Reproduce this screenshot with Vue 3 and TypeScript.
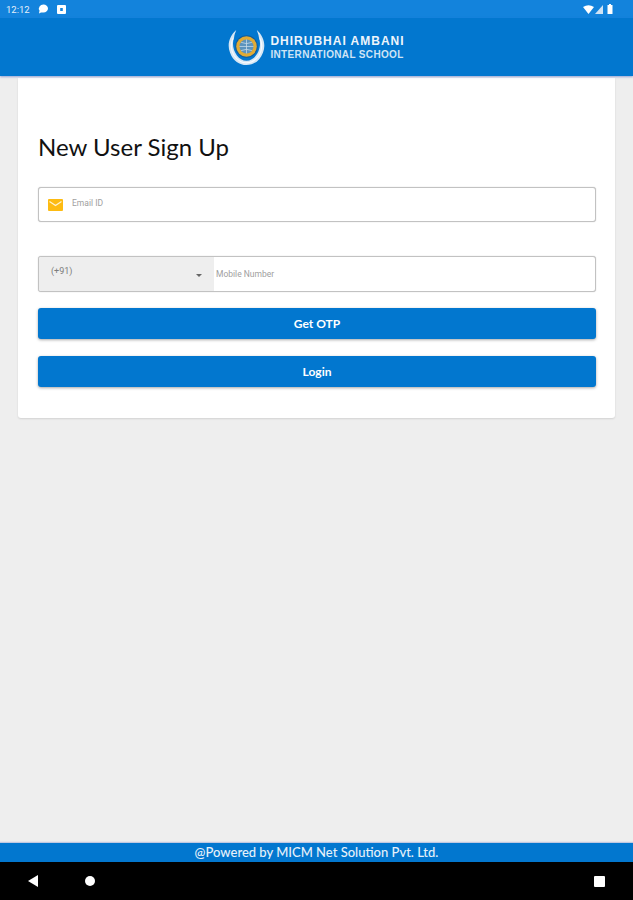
<script setup lang="ts">
const footerText = '@Powered by MICM Net Solution Pvt. Ltd.'
</script>

<template>
  <div class="screen">
    <div class="status">
      <div class="status-left">
        <span class="time">12:12</span>
        <svg width="11" height="10" viewBox="0 0 11 10"><path d="M5.500 0.500a4.500 4 0 0 1 4.500 4 4.500 4 0 0 1-4.500 4H3L1 9.500 1.500 6.500A4.500 4 0 0 1 5.500 0.500Z" fill="#fff" /></svg>
        <svg width="9" height="9" viewBox="0 0 9 9"><path fill-rule="evenodd" d="M1 0h7a1 1 0 0 1 1 1v7a1 1 0 0 1-1 1H1a1 1 0 0 1-1-1V1a1 1 0 0 1 1-1ZM3.200 3v3h2.600V3Z" fill="#fff" /></svg>
      </div>
      <div class="status-right">
        <svg width="11" height="9" viewBox="0 0 11 9"><path d="M0 2Q5.500-1.500 11 2L5.500 9Z" fill="#fff" /></svg>
        <svg width="8" height="9" viewBox="0 0 8 9"><path d="M8 0V9H0Z" fill="#cfe3f5" /></svg>
        <svg class="battery" width="6" height="10" viewBox="0 0 5 10"><path d="M1.500 0h2v1H5v9H0V1h1.500Z" fill="#fff" /></svg>
      </div>
    </div>

    <header class="topbar">
      <div class="logo">
        <svg width="37" height="37" viewBox="0 0 36 36">
          <path d="M8 1C1 7-1 16 2 23c3 8 9 12 16 12s13-4 16-12c3-7 1-16-6-22 1 3 2 5 2 7 4 10-3 23-12 23S2 18 6 8c0-2 1-4 2-7Z" fill="#d6e7f5" />
          <path d="M5 9C2 15 3 21 6 26c3 4 7 7 12 7s9-3 12-7c3-5 4-11 1-17" stroke="#f7fbfe" stroke-width="1.100" fill="none" />
          <circle cx="18" cy="17" r="11" fill="#0f5c9e" />
          <circle cx="18" cy="17" r="10" fill="#e0ab35" />
          <circle cx="18" cy="17" r="6.800" fill="#5b93bd" />
          <path d="M11.200 17h13.600M18 10.200v13.600M12.800 13q5.200 2.500 10.400 0M12.800 21q5.200-2.500 10.400 0" stroke="#cfe0ec" stroke-width="0.700" fill="none" />
        </svg>
        <div class="logo-text">
          <div class="logo-top">DHIRUBHAI AMBANI</div>
          <div class="logo-bottom">INTERNATIONAL SCHOOL</div>
        </div>
      </div>
    </header>

    <main class="content">
      <section class="card">
        <h1>New User Sign Up</h1>

        <div class="field email">
          <svg class="mail" width="15" height="12" viewBox="0 0 15 12">
            <rect width="15" height="12" rx="1" fill="#fdbb12" />
            <path d="M1.500 2.500 7.500 6.500 13.500 2.500" stroke="#fff3cf" stroke-width="1.300" fill="none" />
          </svg>
          <span class="placeholder">Email ID</span>
        </div>

        <div class="field phone">
          <div class="code">
            <span class="code-value">(+91)</span>
            <span class="caret"></span>
          </div>
          <span class="placeholder mobile">Mobile Number</span>
        </div>

        <button class="action otp" type="button">Get OTP</button>
        <button class="action login" type="button">Login</button>
      </section>
    </main>

    <footer class="powered">{{ footerText }}</footer>

    <nav class="navbar">
      <div class="nav-left">
        <svg width="11" height="12" viewBox="0 0 11 12"><path d="M10 0V12L0 6Z" fill="#fff" /></svg>
        <span class="home"></span>
      </div>
      <span class="recent"></span>
    </nav>
  </div>
</template>

<style>
html,
body {
  margin: 0;
  background: #eeeeee;
}
</style>

<style scoped>
.screen {
  width: 633px;
  height: 900px;
  display: flex;
  flex-direction: column;
  background: #eeeeee;
  font-family: Lato, "Liberation Sans", sans-serif;
  overflow: hidden;
}
.status {
  height: 18px;
  background: #1383dc;
  display: flex;
  align-items: center;
  justify-content: space-between;
  padding: 0 20px 0 6px;
  color: #fff;
}
.status-left,
.status-right {
  display: flex;
  align-items: center;
}
.status-left {
  gap: 8px;
}
.status-right {
  gap: 1px;
}
.battery {
  margin-left: 3px;
}
.time {
  font-family: Roboto, sans-serif;
  font-size: 9.500px;
  color: #e4f0fa;
}
.topbar {
  height: 58px;
  background: #0277cf;
  display: flex;
  align-items: center;
  justify-content: center;
  box-shadow: 0 1px 2px rgba(60, 90, 190, 0.5);
  position: relative;
}
.logo {
  display: flex;
  align-items: center;
  gap: 5px;
}
.logo-text {
  color: #eef5fb;
  font-family: "Liberation Sans", sans-serif;
  font-weight: 700;
  line-height: 13px;
  white-space: nowrap;
  margin-top: 2px;
}
.logo-top {
  font-size: 12px;
  letter-spacing: 1px;
}
.logo-bottom {
  font-size: 10px;
  letter-spacing: 0.350px;
  color: #cfe4f5;
}
.content {
  flex: 1;
  padding: 2px 18px 0;
}
.card {
  height: 340px;
  box-sizing: border-box;
  background: #fff;
  border-radius: 0 0 3px 3px;
  box-shadow: 0 1px 2px rgba(0, 0, 0, 0.12);
  padding: 53px 19px 0 20px;
}
h1 {
  margin: 0 0 24px;
  font-size: 24px;
  line-height: 32px;
  font-weight: 400;
  color: #111;
}
.field {
  box-sizing: border-box;
  border: 1px solid #c2c2c2;
  border-radius: 3px;
  display: flex;
  align-items: center;
  background: #fff;
  box-shadow: 0 0 1px rgba(0, 0, 0, 0.3);
}
.email {
  height: 35px;
  padding: 0 9px;
  gap: 9px;
  margin-bottom: 34px;
}
.mail {
  margin-top: 1px;
}
.placeholder {
  font-family: Roboto, sans-serif;
  font-size: 8.500px;
  color: #a0a0a0;
  margin-bottom: 4px;
}
.phone {
  height: 36px;
  margin-bottom: 16px;
  overflow: hidden;
}
.code {
  width: 175px;
  height: 100%;
  background: #eeeeee;
  display: flex;
  align-items: center;
  justify-content: space-between;
  padding: 0 12px;
  box-sizing: border-box;
}
.code-value {
  font-family: Roboto, sans-serif;
  font-size: 9px;
  color: #7c7c7c;
  margin-bottom: 7px;
}
.caret {
  width: 0;
  height: 0;
  border-left: 3.500px solid transparent;
  border-right: 3.500px solid transparent;
  border-top: 3.500px solid #666;
  margin-top: 2px;
}
.mobile {
  margin: 0 0 0 2px;
}
.action {
  display: block;
  width: 100%;
  height: 31px;
  border: none;
  border-radius: 3px;
  background: #0277cf;
  color: #fff;
  font-family: Lato, sans-serif;
  font-size: 12px;
  font-weight: 700;
  padding: 0;
  box-shadow: 0 1px 3px rgba(0, 0, 0, 0.35);
}
.otp {
  margin-bottom: 17px;
}
.powered {
  height: 19px;
  background: #0277cf;
  color: #e6f1fa;
  font-size: 13px;
  font-weight: 500;
  line-height: 19px;
  text-align: center;
  box-shadow: 0 -1px 1px rgba(60, 90, 190, 0.25);
}
.navbar {
  height: 38px;
  background: #000;
  display: flex;
  align-items: center;
  justify-content: space-between;
  padding: 0 28px;
}
.nav-left {
  display: flex;
  align-items: center;
  gap: 46px;
}
.home {
  width: 10px;
  height: 10px;
  border-radius: 50%;
  background: #fff;
}
.recent {
  width: 11px;
  height: 11px;
  border-radius: 1px;
  background: #fff;
}
</style>
